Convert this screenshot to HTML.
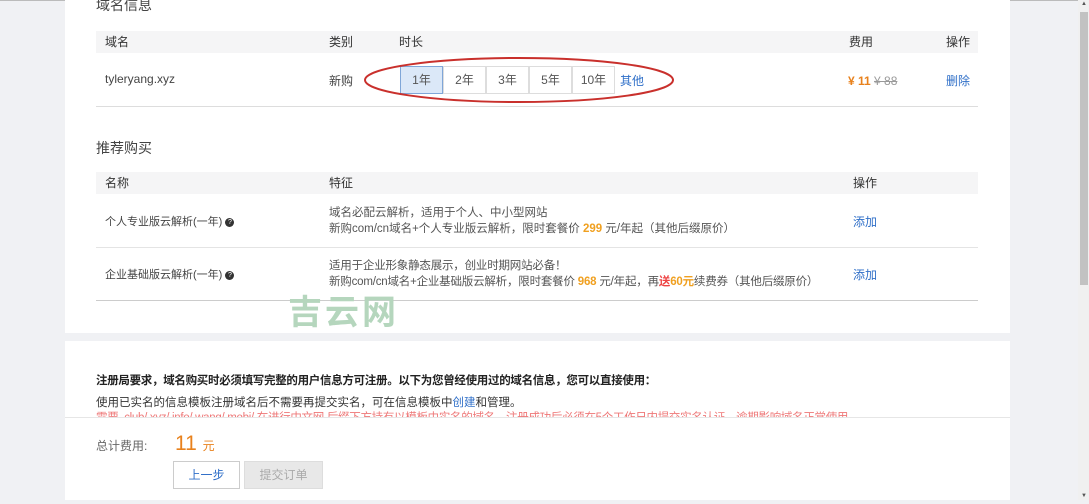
<!DOCTYPE html>
<html><head><meta charset="utf-8"><style>
*{margin:0;padding:0;box-sizing:border-box}
body{width:1089px;height:500px;overflow:hidden;background:#f0f1f4;font-family:"Liberation Sans","Noto Sans CJK SC",sans-serif;font-size:12px;color:#333;position:relative}
.a{position:absolute;white-space:nowrap;line-height:16px}
.card{position:absolute;left:65px;width:945px;background:#fff}
.hd{position:absolute;left:96px;width:882px;height:22px;background:#f5f5f6}
.ln{position:absolute;left:96px;width:882px;height:1px;background:#e4e4e4}
.blue{color:#2f6fc8}
.btn{position:absolute;top:66px;height:28px;width:43px;border:1px solid #ddd;text-align:center;line-height:26px;background:#fff;color:#555}
</style></head><body>
<div class="a" style="left:0;top:0;width:1078px;height:1px;background:#bbb"></div>
<div class="card" style="top:0;height:333px"></div>
<div class="card" style="top:341px;height:159px"></div>

<div class="a" style="left:96px;top:-3px;font-size:14px;color:#444">域名信息</div>
<div class="hd" style="top:31px"></div>
<div class="a" style="left:105px;top:34px">域名</div>
<div class="a" style="left:329px;top:34px">类别</div>
<div class="a" style="left:399px;top:34px">时长</div>
<div class="a" style="left:849px;top:34px">费用</div>
<div class="a" style="left:946px;top:34px">操作</div>
<div class="a" style="left:105px;top:71px;color:#444">tyleryang.xyz</div>
<div class="a" style="left:329px;top:73px;color:#444">新购</div>
<div class="btn" style="left:400px;background:#dbe8f8;border-color:#7fa6d8">1年</div>
<div class="btn" style="left:443px">2年</div>
<div class="btn" style="left:486px">3年</div>
<div class="btn" style="left:529px">5年</div>
<div class="btn" style="left:572px">10年</div>
<div class="a blue" style="left:620px;top:73px">其他</div>
<svg class="a" style="left:0;top:0" width="1089" height="120"><ellipse cx="519" cy="80" rx="154" ry="22" fill="none" stroke="#c9302c" stroke-width="2"/></svg>
<div class="a" style="left:848px;top:73px;color:#e8811c;font-weight:bold">¥ 11 <span style="color:#999;font-weight:normal;text-decoration:line-through">¥ 88</span></div>
<div class="a blue" style="left:946px;top:73px">删除</div>
<div class="ln" style="top:106px;background:#ddd"></div>

<div class="a" style="left:96px;top:140px;font-size:14px;color:#444">推荐购买</div>
<div class="hd" style="top:172px"></div>
<div class="a" style="left:105px;top:175px">名称</div>
<div class="a" style="left:329px;top:175px">特征</div>
<div class="a" style="left:853px;top:175px">操作</div>
<div class="a" style="left:105px;top:214px;font-size:11px;color:#444">个人专业版云解析(一年) <span style="display:inline-block;width:9px;height:9px;border-radius:50%;background:#333;color:#fff;font-size:7px;line-height:9px;text-align:center;vertical-align:middle">?</span></div>
<div class="a" style="left:329px;top:205px;color:#555;font-size:11.5px;line-height:16px">域名必配云解析，适用于个人、中小型网站<br>新购com/cn域名+个人专业版云解析，限时套餐价 <b style="color:#f0a020">299</b> 元/年起（其他后缀原价）</div>
<div class="a blue" style="left:853px;top:214px">添加</div>
<div class="ln" style="top:247px"></div>
<div class="a" style="left:105px;top:267px;font-size:11px;color:#444">企业基础版云解析(一年) <span style="display:inline-block;width:9px;height:9px;border-radius:50%;background:#333;color:#fff;font-size:7px;line-height:9px;text-align:center;vertical-align:middle">?</span></div>
<div class="a" style="left:329px;top:258px;color:#555;font-size:11.5px;line-height:16px;letter-spacing:-0.2px">适用于企业形象静态展示，创业时期网站必备！<br>新购com/cn域名+企业基础版云解析，限时套餐价 <b style="color:#f0a020">968</b> 元/年起，再<b style="color:#f0a020"><span style="color:#e44">送</span>60元</b>续费券（其他后缀原价）</div>
<div class="a blue" style="left:853px;top:267px">添加</div>
<div class="ln" style="top:300px;background:#ccc"></div>
<div class="a" style="left:288px;top:295px;font-size:34px;line-height:36px;font-weight:bold;color:#b5d6bd;letter-spacing:3px">吉云网</div>

<div class="a" style="left:96px;top:373px;font-weight:bold;color:#222;font-size:11.5px;letter-spacing:-0.3px">注册局要求，域名购买时必须填写完整的用户信息方可注册。以下为您曾经使用过的域名信息，您可以直接使用：</div>
<div class="a" style="left:96px;top:395px;color:#333;font-size:11.5px">使用已实名的信息模板注册域名后不需要再提交实名，可在信息模板中<span class="blue">创建</span>和管理。</div>
<div class="a" style="left:96px;top:410px;color:#e77;height:7px;overflow:hidden;font-size:11.5px;letter-spacing:-0.3px">需要 .club/.xyz/.info/.wang/.mobi/.在进行中文网 后缀下方持有以模板中实名的域名，注册成功后必须在5个工作日内提交实名认证，逾期影响域名正常使用</div>

<div class="a" style="left:65px;top:417px;width:945px;height:83px;background:#fff;border-top:1px solid #e6e6e6"></div>
<div class="a" style="left:96px;top:438px;color:#666">总计费用:</div>
<div class="a" style="left:175px;top:433px;font-size:21px;line-height:22px;color:#e8811c">11 <span style="font-size:12px">元</span></div>
<div class="a" style="left:173px;top:461px;width:67px;height:28px;border:1px solid #ccc;text-align:center;line-height:26px;color:#2f6fc8;background:#fff">上一步</div>
<div class="a" style="left:244px;top:461px;width:79px;height:28px;border:1px solid #ddd;text-align:center;line-height:26px;color:#aaa;background:#e8e8e8">提交订单</div>

<div class="a" style="left:1078px;top:0;width:11px;height:500px;background:#f0f0f0"></div>
<div class="a" style="left:1080px;top:12px;width:8px;height:273px;background:#c2c2c2"></div>
<div class="a" style="left:1081px;top:-4px;font-size:6px;color:#555">▲</div>
<div class="a" style="left:1081px;top:488px;font-size:6px;color:#555">▼</div>
</body></html>
